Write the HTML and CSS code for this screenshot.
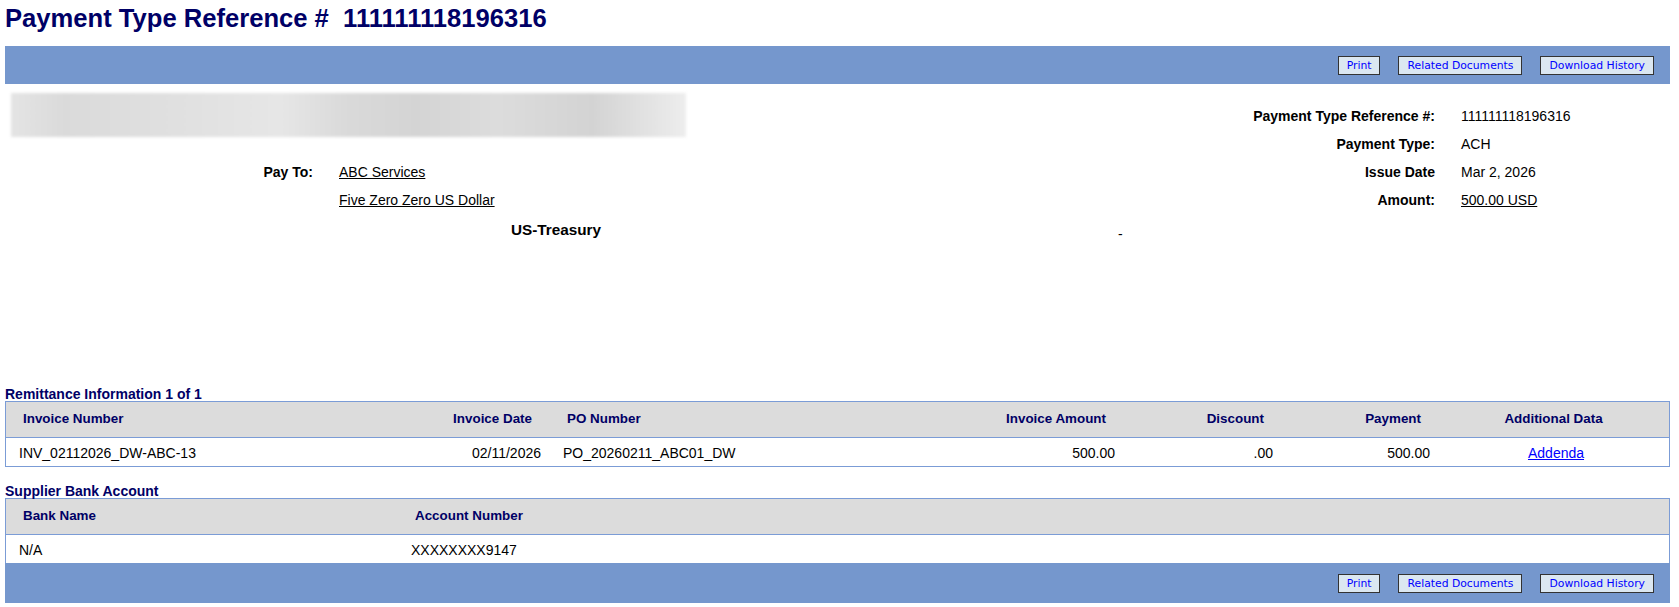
FILE: index.html
```html
<!DOCTYPE html>
<html lang="en">
<head>
<meta charset="utf-8">
<title>Payment Type Reference</title>
<link rel="stylesheet" href="styles.css">
</head>
<body>
<div class="page">
  <h1 class="title">Payment Type Reference #&nbsp; 111111118196316</h1>

  <div class="toolbar">
    <button class="btn" type="button">Print</button>
    <button class="btn" type="button">Related Documents</button>
    <button class="btn" type="button">Download History</button>
  </div>

  <div class="info">
    <div class="info-left">
      <div class="redacted"></div>
      <div class="payto">
        <div class="payto-label">Pay To:</div>
        <div class="payto-value"><a class="plain-link" href="#">ABC Services</a></div>
        <div class="payto-label"></div>
        <div class="payto-value"><a class="plain-link" href="#">Five Zero Zero US Dollar</a></div>
      </div>
      <div class="bank-name">US-Treasury</div>
    </div>
    <div class="info-right">
      <div class="kv">
        <div class="kv-label">Payment Type Reference #:</div>
        <div class="kv-value">111111118196316</div>
        <div class="kv-label">Payment Type:</div>
        <div class="kv-value">ACH</div>
        <div class="kv-label">Issue Date</div>
        <div class="kv-value">Mar 2, 2026</div>
        <div class="kv-label">Amount:</div>
        <div class="kv-value"><a class="plain-link" href="#">500.00 USD</a></div>
      </div>
      <div class="dash">-</div>
    </div>
  </div>

  <div class="section-title">Remittance Information 1 of 1</div>
  <div class="grid-table">
    <div class="row row-head cols-remit">
      <div class="cell">Invoice Number</div>
      <div class="cell right">Invoice Date</div>
      <div class="cell">PO Number</div>
      <div class="cell right">Invoice Amount</div>
      <div class="cell right">Discount</div>
      <div class="cell right">Payment</div>
      <div class="cell center">Additional Data</div>
    </div>
    <div class="row row-data cols-remit">
      <div class="cell">INV_02112026_DW-ABC-13</div>
      <div class="cell right">02/11/2026</div>
      <div class="cell">PO_20260211_ABC01_DW</div>
      <div class="cell right">500.00</div>
      <div class="cell right">.00</div>
      <div class="cell right">500.00</div>
      <div class="cell center"><a class="blue-link" href="#">Addenda</a></div>
    </div>
  </div>

  <div class="section-title section-title-spaced">Supplier Bank Account</div>
  <div class="grid-table grid-table-open">
    <div class="row row-head cols-bank">
      <div class="cell">Bank Name</div>
      <div class="cell">Account Number</div>
    </div>
    <div class="row row-data cols-bank">
      <div class="cell">N/A</div>
      <div class="cell">XXXXXXXX9147</div>
    </div>
  </div>

  <div class="toolbar toolbar-bottom">
    <button class="btn" type="button">Print</button>
    <button class="btn" type="button">Related Documents</button>
    <button class="btn" type="button">Download History</button>
  </div>
</div>
</body>
</html>
```

FILE: styles.css
```css
* {
  box-sizing: border-box;
}

html, body {
  margin: 0;
  padding: 0;
  background: #ffffff;
}

body {
  font-family: "Liberation Sans", Arial, sans-serif;
  font-size: 14px;
  color: #000000;
}

.page {
  width: 1670px;
  padding: 4px 0 0 5px;
}

.title {
  margin: 0 0 13px 0;
  font-size: 25.6px;
  line-height: 29px;
  font-weight: bold;
  color: #000066;
  white-space: nowrap;
}

.toolbar {
  display: flex;
  justify-content: flex-end;
  align-items: center;
  gap: 18px;
  height: 38px;
  padding-right: 16px;
  background: #7597cd;
}

.toolbar-bottom {
  height: 40px;
}

.btn {
  height: 19px;
  padding: 0 8px;
  margin: 0;
  font-family: "DejaVu Sans", Verdana, sans-serif;
  font-size: 10.8px;
  line-height: 17px;
  color: #0000ff;
  background: #dbe7f1;
  border: 1px solid #333333;
  border-radius: 0;
  cursor: pointer;
}

.info {
  display: flex;
  height: 301px;
}

.info-left {
  width: 1102px;
  padding-top: 9px;
}

.redacted {
  width: 675px;
  height: 44px;
  margin-left: 6px;
  background: linear-gradient(90deg, #e4e4e4 0%, #dadada 8%, #dedede 20%, #e6e6e6 40%, #d9d9d9 50%, #d4d4d4 60%, #dcdcdc 72%, #d3d3d3 86%, #ededed 100%);
  filter: blur(1.5px);
}

.payto {
  display: grid;
  grid-template-columns: 308px 1fr;
  margin-top: 21px;
  line-height: 28px;
}

.payto-label {
  text-align: right;
  font-weight: bold;
}

.payto-value {
  padding-left: 26px;
}

.plain-link {
  color: #000000;
  text-decoration: underline;
}

.blue-link {
  color: #0000ff;
  text-decoration: underline;
}

.bank-name {
  margin-top: 6px;
  line-height: 20px;
  font-size: 15.3px;
  font-weight: bold;
  text-align: center;
}

.info-right {
  flex: 1;
  padding-top: 18px;
}

.kv {
  display: grid;
  grid-template-columns: 328px 1fr;
  line-height: 28px;
}

.kv-label {
  text-align: right;
  font-weight: bold;
}

.kv-value {
  padding-left: 26px;
}

.dash {
  margin-top: 6px;
  padding-left: 11px;
  line-height: 28px;
}

.section-title {
  height: 16px;
  font-size: 14px;
  line-height: 18px;
  font-weight: bold;
  color: #000066;
}

.section-title-spaced {
  margin-top: 15px;
}

.grid-table {
  border: 1px solid #7b9cd6;
}

.grid-table-open {
  border-bottom: 0;
}

.row {
  display: grid;
}

.cols-remit {
  grid-template-columns: 324px 220px 350px 224px 158px 157px 1fr;
}

.cols-bank {
  grid-template-columns: 392px 1fr;
}

.row-head {
  height: 36px;
  background: #dcdcdc;
  border-bottom: 1px solid #7b9cd6;
  font-size: 13.4px;
  font-weight: bold;
  color: #000066;
}

.row-head .cell {
  padding: 9px 18px 0 17px;
  line-height: 16px;
}

.row-data {
  height: 28px;
  background: #ffffff;
}

.row-data .cell {
  padding: 7px 9px 0 13px;
  line-height: 16px;
}

.cell {
  white-space: nowrap;
}

.right {
  text-align: right;
}

.center {
  text-align: center;
}
```
